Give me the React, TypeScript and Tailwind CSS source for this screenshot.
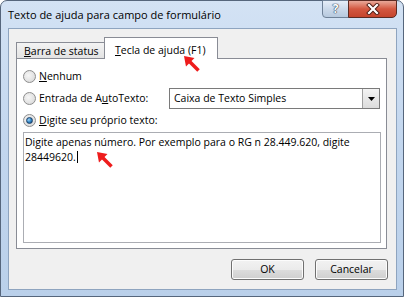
import React from "react";

function Radio({ checked }: { checked?: boolean }) {
  return (
    <span className="relative inline-flex h-[13px] w-[13px] shrink-0 items-center justify-center rounded-full border border-[#8d8d8d] bg-[radial-gradient(circle_at_40%_40%,#f6f6f6_0%,#e2e2e2_60%,#cfcfcf_100%)]">
      {checked && (
        <span className="h-[7px] w-[7px] rounded-full border border-[#1c3f66] bg-[radial-gradient(circle_at_35%_35%,#9fd4f7_0%,#2a7fc0_55%,#123d6b_100%)]" />
      )}
    </span>
  );
}

function RedArrow() {
  return (
    <svg width="16" height="16" viewBox="0 0 16 16">
      <line x1="5" y1="5" x2="14.5" y2="14.5" stroke="#ee1c1c" strokeWidth="3.6" />
      <polygon points="0,0 10.5,2 2,10.5" fill="#ee1c1c" />
    </svg>
  );
}

export default function App() {
  return (
    <div className="relative flex h-[297px] w-[404px] flex-col rounded-t-[7px] border border-[#56667c] bg-gradient-to-b from-[#d3e2f4] via-[#c2d6ee] to-[#bad0ea] font-['Open_Sans','Noto_Sans',sans-serif] text-[10.5px] text-black">
      {/* title bar */}
      <div className="flex h-[27px] shrink-0 items-start">
        <div className="flex-1 pl-[7px] pt-[6px] text-[11px] leading-[16px] text-black">
          Texto de ajuda para campo de formulário
        </div>
        <div className="mr-[6px] mt-[-1px] flex h-[18px]">
          <div className="flex w-[27px] items-center justify-center rounded-bl-[4px] border border-[#6f8197] bg-gradient-to-b from-[#e6eef8] via-[#cbd9ea] to-[#b7c9de]">
            <span className="text-[12px] font-bold leading-none text-white [text-shadow:0_0_1px_#2b3b52,0_0_1px_#2b3b52,0_0_1px_#2b3b52]">
              ?
            </span>
          </div>
          <div className="ml-[-1px] flex w-[49px] items-center justify-center rounded-br-[5px] border border-[#5c2a22] bg-gradient-to-b from-[#e8a899] via-[#d35740] to-[#c5442c]">
            <svg width="14" height="12" viewBox="0 0 14 12">
              <path d="M3 2 L11 10 M11 2 L3 10" stroke="#4a1a12" strokeWidth="4" strokeLinecap="square" />
              <path d="M3 2 L11 10 M11 2 L3 10" stroke="#ffffff" strokeWidth="2.2" strokeLinecap="square" />
            </svg>
          </div>
        </div>
      </div>

      {/* client area */}
      <div className="mb-[6px] ml-[7px] mr-[6px] flex flex-1 flex-col border border-[#8ea4bf] bg-[#f0f0f0] pl-[7px] pr-[8px] pt-[8px]">
        {/* tabs */}
        <div className="flex h-[21px] items-end">
          <div className="flex h-[16px] w-[89px] items-center border border-b-0 border-[#898c95] bg-gradient-to-b from-[#f3f3f3] to-[#e3e3e3] pl-[7px] leading-[14px]">
            <span>
              <span className="underline">B</span>arra de status
            </span>
          </div>
          <div className="relative z-10 mb-[-1px] ml-[-1px] flex h-[22px] w-[114px] items-start border border-b-0 border-[#898c95] bg-white pl-[10px] pt-[5px] leading-[14px]">
            <span>
              <span className="underline">T</span>ecla de ajuda (F1)
            </span>
          </div>
        </div>

        {/* panel */}
        <div className="mr-[1px] flex h-[191px] flex-col border border-[#898c95] bg-white pt-[7px]">
          <div className="flex h-[21px] items-center gap-[3px] pl-[6px]">
            <Radio />
            <span>
              <span className="underline">N</span>enhum
            </span>
          </div>
          <div className="mt-[1px] flex h-[21px] items-center gap-[3px] pl-[6px]">
            <Radio />
            <span>
              Entrada de A<span className="underline">u</span>toTexto:
            </span>
            <div className="ml-auto mr-[6px] flex h-[21px] w-[211px] border border-[#7a7a7a] bg-white">
              <div className="flex flex-1 items-center pl-[4px]">Caixa de Texto Simples</div>
              <div className="flex w-[17px] items-center justify-center border-l border-[#a0a0a0] bg-gradient-to-b from-[#f4f4f4] to-[#dcdcdc]">
                <svg width="7" height="4" viewBox="0 0 7 4">
                  <polygon points="0,0 7,0 3.5,4" fill="#000" />
                </svg>
              </div>
            </div>
          </div>
          <div className="mt-[1px] flex h-[21px] items-center gap-[3px] pl-[6px]">
            <Radio checked />
            <span>
              <span className="underline">D</span>igite seu próprio texto:
            </span>
          </div>
          <div className="ml-[6px] mr-[5px] mt-[1px] h-[111px] border border-[#abadb3] bg-white px-[1px] pt-[2px] leading-[14px]">
            Digite apenas número. Por exemplo para o RG n 28.449.620, digite
            <br />
            28449620.<span className="ml-[1px] inline-block h-[12px] w-[1px] translate-y-[2px] bg-black" />
          </div>
        </div>

        {/* buttons */}
        <div className="mt-[10px] flex justify-end gap-[11px]">
          <button className="h-[21px] w-[73px] rounded-[3px] border border-[#707070] bg-[linear-gradient(to_bottom,#f2f2f2_0%,#ebebeb_50%,#dddddd_50%,#cfcfcf_100%)] text-[10.5px] leading-none shadow-[inset_0_0_0_1px_#fcfcfc]">
            OK
          </button>
          <button className="h-[21px] w-[73px] rounded-[3px] border border-[#707070] bg-[linear-gradient(to_bottom,#f2f2f2_0%,#ebebeb_50%,#dddddd_50%,#cfcfcf_100%)] text-[10.5px] leading-none shadow-[inset_0_0_0_1px_#fcfcfc]">
            Cancelar
          </button>
        </div>
      </div>

      {/* red arrows (annotations) */}
      <div className="absolute left-[183px] top-[55px] z-20">
        <RedArrow />
      </div>
      <div className="absolute left-[96px] top-[151px] z-20">
        <RedArrow />
      </div>
    </div>
  );
}
